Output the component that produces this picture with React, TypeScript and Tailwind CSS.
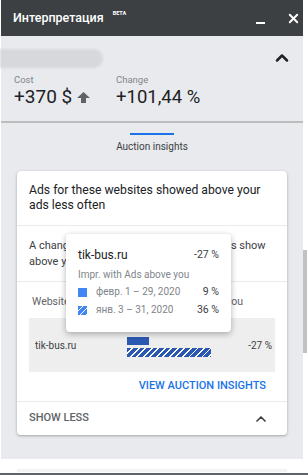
import React from 'react';
import { X, ChevronUp } from 'lucide-react';

// Hatched fill for the previous period (bar and legend square)
const barHatch =
  'bg-[repeating-linear-gradient(135deg,#2b58b0_0px,#2b58b0_3.5px,#ffffff_3.5px,#ffffff_4.6px)]';
const legendHatch =
  'bg-[repeating-linear-gradient(135deg,#4285f4_0px,#4285f4_3px,#ffffff_3px,#ffffff_4.2px)]';

const ArrowUpFilled = () => (
  <svg width="13" height="11" viewBox="0 0 13 11" className="ml-[5px]">
    <polygon points="6.5,0 13,6 9,6 9,11 4,11 4,6 0,6" fill="#5f6368" />
  </svg>
);

const App: React.FC = () => {
  return (
    <div className="relative w-[308px] h-[475px] overflow-hidden bg-white font-['Roboto',sans-serif]">
      <div className="ml-px w-[302px] flex flex-col">
        {/* header */}
        <div className="h-9 bg-[#3c4043] flex items-center pl-3 text-white">
          <span className="text-[12.5px] font-medium">Интерпретация</span>
          <span className="ml-[9px] -mt-[9px] text-[5.5px] font-bold">BETA</span>
          <div className="ml-auto mt-[10px] mr-[21px] w-[9px] h-[2px] bg-white" />
          <X className="mr-[2px] w-[15px] h-[15px]" strokeWidth={3} />
        </div>

        {/* summary */}
        <div className="h-[87px] bg-[#e8eaed] border-b-2 border-[#bdbdbd]">
          <div className="flex items-center pt-[12px]">
            <div className="-ml-px w-[103px] h-[19px] rounded-r-full bg-[#d7d8db] blur-[1px]" />
            <ChevronUp className="ml-auto mr-[11px] w-5 h-5 text-[#202124]" strokeWidth={3} />
          </div>
          <div className="flex pl-[13px] mt-[6px]">
            <div className="w-[102px]">
              <div className="text-[9.5px] text-[#80868b] leading-3">Cost</div>
              <div className="flex items-center text-[19px] text-[#202124] leading-[22px]">
                +370 $
                <ArrowUpFilled />
              </div>
            </div>
            <div>
              <div className="text-[9.5px] text-[#80868b] leading-3">Change</div>
              <div className="text-[18.5px] text-[#202124] leading-[22px]">+101,44 %</div>
            </div>
          </div>
        </div>

        {/* body */}
        <div className="bg-[#e8eaed] px-4 pb-6">
          <div className="flex flex-col items-center pt-[10px]">
            <div className="w-11 h-[2px] bg-[#1a73e8]" />
            <div className="mt-[5px] text-[10px] leading-[14px] text-[#3c4043]">Auction insights</div>
          </div>

          <div className="relative mt-[17px] bg-white rounded-sm shadow-[0_1px_3px_rgba(0,0,0,0.3)]">
            <div className="px-3 pt-3 pb-3 text-[12.2px] leading-[15px] text-[#202124] border-b border-[#e8eaed]">
              Ads for these websites showed above your ads less often
            </div>
            <div className="px-3 pt-3 pb-[11px] text-[11px] leading-4 text-[#3c4043] border-b border-[#e8eaed]">
              A change in how often these websites' ads show above your ads
            </div>
            <div className="px-3 pt-[13px]">
              <div className="flex pl-[3px] text-[10.5px] text-[#5f6368] leading-[14px]">
                <span>Website</span>
                <span className="ml-auto mr-[32px]">Impr. with Ads above you</span>
              </div>
              <div className="mt-[9px] h-[54px] bg-[#eeeeee] flex items-center pl-[6px] pr-[3px]">
                <span className="w-[92px] text-[10px] text-[#3c4043]">tik-bus.ru</span>
                <div className="flex flex-col gap-[3px] pt-[3px]">
                  <div className="w-[22px] h-[8px] bg-[#2b58b0]" />
                  <div className={`w-[84px] h-[9px] ${barHatch}`} />
                </div>
                <span className="ml-auto text-[10px] text-[#3c4043]">-27 %</span>
              </div>
              <div className="flex justify-end pt-[7px] pb-[8px] pr-[9px]">
                <span className="text-[11px] leading-[14px] font-medium text-[#1a73e8]">
                  VIEW AUCTION INSIGHTS
                </span>
              </div>
            </div>
            <div className="border-t border-[#e8eaed] h-[34px] flex items-center px-3">
              <span className="text-[11px] font-medium text-[#5f6368]">SHOW LESS</span>
              <ChevronUp className="ml-auto mr-[6px] w-4 h-4 text-[#3c4043]" strokeWidth={2.5} />
            </div>

            {/* hover tooltip over the chart */}
            <div className="absolute left-[49px] top-[63px] w-[165px] h-[98px] bg-white rounded-sm shadow-[0_2px_6px_rgba(0,0,0,0.3)] pl-3 pr-3 pt-[13px]">
              <div className="flex items-center leading-4">
                <span className="text-[12px] text-[#202124]">tik-bus.ru</span>
                <span className="ml-auto text-[10.5px] text-[#3c4043]">-27 %</span>
              </div>
              <div className="mt-[5px] text-[10px] text-[#80868b] leading-[14px]">Impr. with Ads above you</div>
              <div className="mt-[3px] flex items-center text-[10px] leading-[14px]">
                <div className="w-[9px] h-[9px] bg-[#4285f4]" />
                <span className="ml-[9px] text-[#80868b]">февр. 1 – 29, 2020</span>
                <span className="ml-auto text-[10.5px] text-[#3c4043]">9 %</span>
              </div>
              <div className="mt-[4px] flex items-center text-[10px] leading-[14px]">
                <div className={`w-[9px] h-[9px] ${legendHatch}`} />
                <span className="ml-[9px] text-[#80868b]">янв. 3 – 31, 2020</span>
                <span className="ml-auto text-[10.5px] text-[#3c4043]">36 %</span>
              </div>
            </div>
          </div>
        </div>

        {/* next card peeking in */}
        <div className="h-[13px] flex items-end px-4">
          <div className="w-full h-[3px] bg-[#f1f3f4]" />
        </div>
      </div>

      <div className="absolute left-0 right-0 bottom-0 h-[2px] bg-[#5f6368]" />
      {/* scrollbar thumb */}
      <div className="absolute left-[303px] top-[250px] w-[4px] h-[103px] bg-[#c1c1c1]" />
    </div>
  );
};

export default App;
